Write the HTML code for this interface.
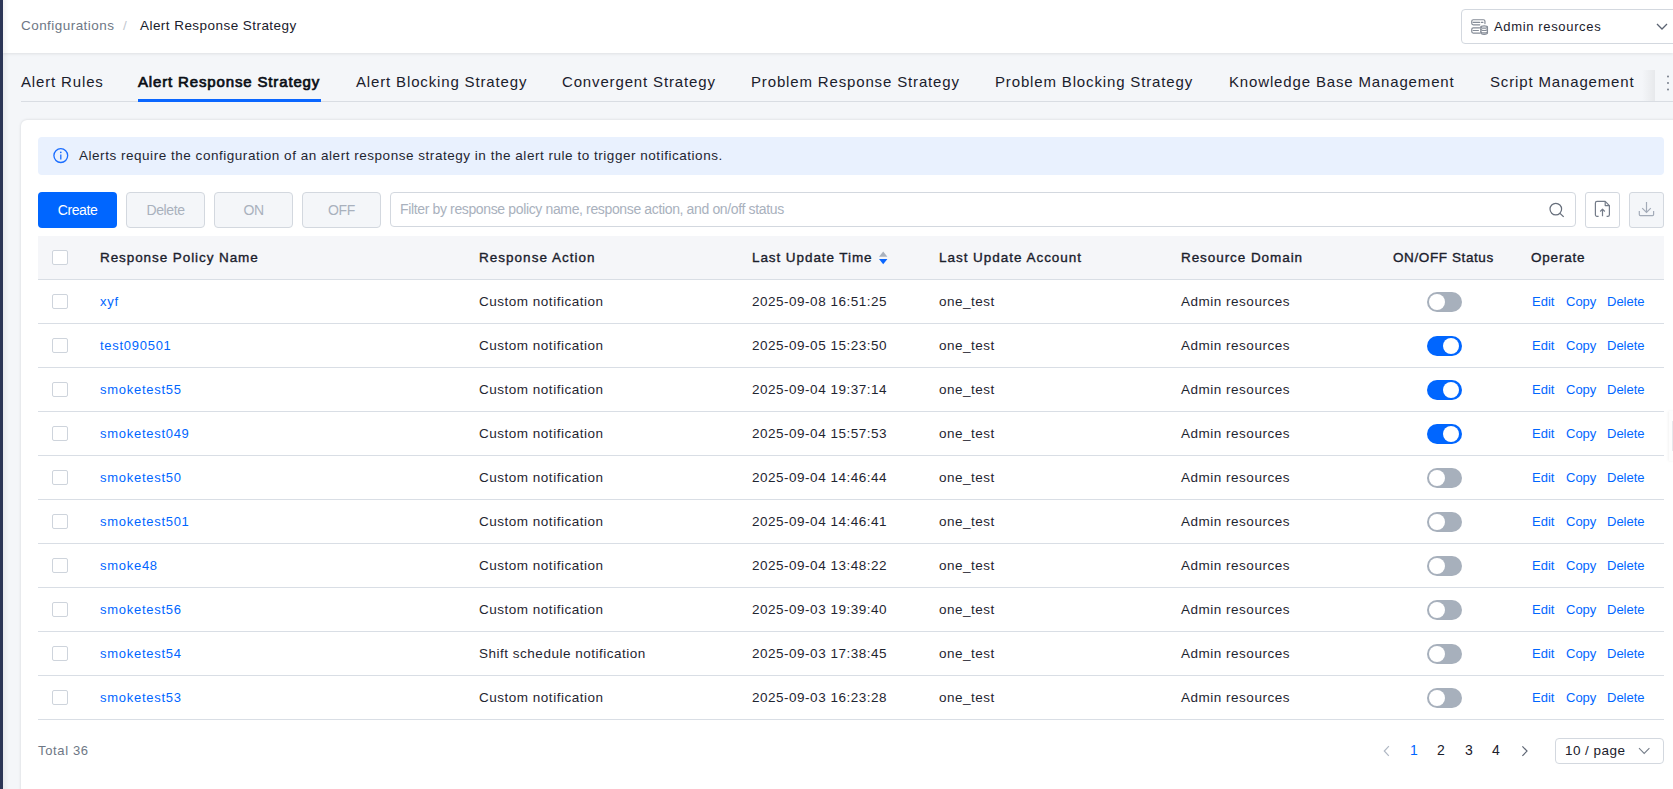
<!DOCTYPE html><html><head><meta charset="utf-8"><style>
*{box-sizing:border-box;margin:0;padding:0}
html,body{width:1673px;height:789px;overflow:hidden}
body{position:relative;background:#f4f6f9;font-family:"Liberation Sans",sans-serif;color:#1a202c}
.a{position:absolute;white-space:nowrap}
.strip{left:0;top:0;width:3px;height:789px;background:#2c3656;z-index:5}
.shadowL{left:3px;top:0;width:6px;height:789px;background:linear-gradient(to right,rgba(0,0,0,0.05),rgba(0,0,0,0));z-index:4}
.hdr{left:3px;top:0;width:1670px;height:53px;background:#fff;box-shadow:0 1px 3px rgba(0,0,0,0.09)}
.bc{font-size:13.5px;letter-spacing:0.45px;line-height:20px}
.sel{left:1461px;top:9px;width:230px;height:35px;border:1px solid #d3d8df;border-radius:4px;background:#fff}
.tabs{font-size:15px;letter-spacing:0.85px;line-height:20px;color:#1a202c}
.tabline{left:21px;top:101px;width:1652px;height:1px;background:#d9dde3}
.card{left:21px;top:120px;width:1700px;height:700px;background:#fff;border-radius:6px;box-shadow:0 0 3px rgba(0,0,0,0.14)}
.alert{left:38px;top:137px;width:1626px;height:38px;background:#e9f1fe;border-radius:4px}
.btn{top:192px;height:36px;border-radius:4px;font-size:14px;letter-spacing:-0.4px;line-height:20px;padding-top:8px;text-align:center}
.btnd{background:#f4f6f9;border:1px solid #d3d8df;color:#a9b1bd;padding-top:7px}
.search{left:390px;top:192px;width:1186px;height:35px;border:1px solid #d3d8df;border-radius:4px;background:#fff}
.th{left:38px;top:236px;width:1626px;height:43px;background:#f5f6f9}
.line{left:38px;height:1px;width:1626px;background:#d9dee5}
.hcell{font-size:13.5px;font-weight:400;letter-spacing:0.9px;line-height:20px;color:#1a202c;-webkit-text-stroke:0.35px #1a202c}
.cell{font-size:13.5px;letter-spacing:0.51px;line-height:20px;color:#1f2531}
.lnk{color:#0066ff}
.cb{width:16px;height:15px;border:1px solid #ced4dc;border-radius:2px;background:#fff}
.tg{width:35px;height:20px;border-radius:10px;background:#a7b0bc}
.tg i{position:absolute;top:2px;left:2px;width:16px;height:16px;border-radius:50%;background:#fff}
.tg.on{background:#0066ff}
.tg.on i{left:16px}
.op{font-size:13px;line-height:20px;color:#0066ff}
</style></head><body><div class="a strip"></div><div class="a shadowL"></div><div class="a hdr"></div><div class="a bc" style="left:21px;top:16px;color:#6e7785">Configurations</div><div class="a bc" style="left:123px;top:16px;color:#c2c8d0">/</div><div class="a bc" style="left:140px;top:16px;color:#1a202c">Alert Response Strategy</div><div class="a sel"></div><div class="a bc" style="left:1494px;top:17px;color:#1a202c;font-size:13px;letter-spacing:0.65px">Admin resources</div><div class="a tabline"></div><div class="a tabs" style="left:21px;top:72px">Alert Rules</div><div class="a tabs" style="left:138px;top:72px;-webkit-text-stroke:0.7px #0b0f16;color:#0b0f16">Alert Response Strategy</div><div class="a" style="left:138px;top:99px;width:183px;height:3px;background:#0a66ff"></div><div class="a tabs" style="left:356px;top:72px">Alert Blocking Strategy</div><div class="a tabs" style="left:562px;top:72px">Convergent Strategy</div><div class="a tabs" style="left:751px;top:72px">Problem Response Strategy</div><div class="a tabs" style="left:995px;top:72px">Problem Blocking Strategy</div><div class="a tabs" style="left:1229px;top:72px">Knowledge Base Management</div><div class="a tabs" style="left:1490px;top:72px">Script Management</div><div class="a" style="left:1642px;top:70px;width:13px;height:31px;background:linear-gradient(to right,rgba(0,0,0,0),rgba(0,0,0,0.055))"></div><div class="a card"></div><div class="a alert"></div><div class="a cell" style="left:79px;top:146px;letter-spacing:0.53px">Alerts require the configuration of an alert response strategy in the alert rule to trigger notifications.</div><div class="a btn" style="left:38px;width:79px;background:#0066ff;color:#fff">Create</div><div class="a btn btnd" style="left:126px;width:79px">Delete</div><div class="a btn btnd" style="left:214px;width:79px">ON</div><div class="a btn btnd" style="left:302px;width:79px">OFF</div><div class="a search"></div><div class="a" style="left:400px;top:199px;font-size:14px;letter-spacing:-0.36px;line-height:20px;color:#a9b1bd">Filter by response policy name, response action, and on/off status</div><div class="a" style="left:1585px;top:192px;width:35px;height:36px;border:1px solid #d3d8df;border-radius:3px;background:#fff"></div><div class="a" style="left:1629px;top:192px;width:35px;height:36px;border:1px solid #d3d8df;border-radius:3px;background:#f4f6f9"></div><div class="a th"></div><div class="a line" style="top:279px"></div><div class="a cb" style="left:52px;top:250px"></div><div class="a hcell" style="left:100px;top:248px;letter-spacing:0.92px">Response Policy Name</div><div class="a hcell" style="left:479px;top:248px;letter-spacing:1.02px">Response Action</div><div class="a hcell" style="left:752px;top:248px;letter-spacing:0.92px">Last Update Time</div><div class="a hcell" style="left:939px;top:248px;letter-spacing:0.97px">Last Update Account</div><div class="a hcell" style="left:1181px;top:248px;letter-spacing:0.93px">Resource Domain</div><div class="a hcell" style="left:1393px;top:248px;letter-spacing:0.6px">ON/OFF Status</div><div class="a hcell" style="left:1531px;top:248px;letter-spacing:0.8px">Operate</div><div class="a line" style="top:323px"></div><div class="a cb" style="left:52px;top:294px"></div><div class="a lnk" style="left:100px;top:292px;font-size:13px;letter-spacing:0.72px;line-height:20px">xyf</div><div class="a cell" style="left:479px;top:292px">Custom notification</div><div class="a cell" style="left:752px;top:292px">2025-09-08 16:51:25</div><div class="a cell" style="left:939px;top:292px">one_test</div><div class="a cell" style="left:1181px;top:292px">Admin resources</div><div class="a tg" style="left:1427px;top:292px"><i></i></div><div class="a op" style="left:1532px;top:292px">Edit</div><div class="a op" style="left:1566px;top:292px">Copy</div><div class="a op" style="left:1607px;top:292px">Delete</div><div class="a line" style="top:367px"></div><div class="a cb" style="left:52px;top:338px"></div><div class="a lnk" style="left:100px;top:336px;font-size:13px;letter-spacing:0.72px;line-height:20px">test090501</div><div class="a cell" style="left:479px;top:336px">Custom notification</div><div class="a cell" style="left:752px;top:336px">2025-09-05 15:23:50</div><div class="a cell" style="left:939px;top:336px">one_test</div><div class="a cell" style="left:1181px;top:336px">Admin resources</div><div class="a tg on" style="left:1427px;top:336px"><i></i></div><div class="a op" style="left:1532px;top:336px">Edit</div><div class="a op" style="left:1566px;top:336px">Copy</div><div class="a op" style="left:1607px;top:336px">Delete</div><div class="a line" style="top:411px"></div><div class="a cb" style="left:52px;top:382px"></div><div class="a lnk" style="left:100px;top:380px;font-size:13px;letter-spacing:0.72px;line-height:20px">smoketest55</div><div class="a cell" style="left:479px;top:380px">Custom notification</div><div class="a cell" style="left:752px;top:380px">2025-09-04 19:37:14</div><div class="a cell" style="left:939px;top:380px">one_test</div><div class="a cell" style="left:1181px;top:380px">Admin resources</div><div class="a tg on" style="left:1427px;top:380px"><i></i></div><div class="a op" style="left:1532px;top:380px">Edit</div><div class="a op" style="left:1566px;top:380px">Copy</div><div class="a op" style="left:1607px;top:380px">Delete</div><div class="a line" style="top:455px"></div><div class="a cb" style="left:52px;top:426px"></div><div class="a lnk" style="left:100px;top:424px;font-size:13px;letter-spacing:0.72px;line-height:20px">smoketest049</div><div class="a cell" style="left:479px;top:424px">Custom notification</div><div class="a cell" style="left:752px;top:424px">2025-09-04 15:57:53</div><div class="a cell" style="left:939px;top:424px">one_test</div><div class="a cell" style="left:1181px;top:424px">Admin resources</div><div class="a tg on" style="left:1427px;top:424px"><i></i></div><div class="a op" style="left:1532px;top:424px">Edit</div><div class="a op" style="left:1566px;top:424px">Copy</div><div class="a op" style="left:1607px;top:424px">Delete</div><div class="a line" style="top:499px"></div><div class="a cb" style="left:52px;top:470px"></div><div class="a lnk" style="left:100px;top:468px;font-size:13px;letter-spacing:0.72px;line-height:20px">smoketest50</div><div class="a cell" style="left:479px;top:468px">Custom notification</div><div class="a cell" style="left:752px;top:468px">2025-09-04 14:46:44</div><div class="a cell" style="left:939px;top:468px">one_test</div><div class="a cell" style="left:1181px;top:468px">Admin resources</div><div class="a tg" style="left:1427px;top:468px"><i></i></div><div class="a op" style="left:1532px;top:468px">Edit</div><div class="a op" style="left:1566px;top:468px">Copy</div><div class="a op" style="left:1607px;top:468px">Delete</div><div class="a line" style="top:543px"></div><div class="a cb" style="left:52px;top:514px"></div><div class="a lnk" style="left:100px;top:512px;font-size:13px;letter-spacing:0.72px;line-height:20px">smoketest501</div><div class="a cell" style="left:479px;top:512px">Custom notification</div><div class="a cell" style="left:752px;top:512px">2025-09-04 14:46:41</div><div class="a cell" style="left:939px;top:512px">one_test</div><div class="a cell" style="left:1181px;top:512px">Admin resources</div><div class="a tg" style="left:1427px;top:512px"><i></i></div><div class="a op" style="left:1532px;top:512px">Edit</div><div class="a op" style="left:1566px;top:512px">Copy</div><div class="a op" style="left:1607px;top:512px">Delete</div><div class="a line" style="top:587px"></div><div class="a cb" style="left:52px;top:558px"></div><div class="a lnk" style="left:100px;top:556px;font-size:13px;letter-spacing:0.72px;line-height:20px">smoke48</div><div class="a cell" style="left:479px;top:556px">Custom notification</div><div class="a cell" style="left:752px;top:556px">2025-09-04 13:48:22</div><div class="a cell" style="left:939px;top:556px">one_test</div><div class="a cell" style="left:1181px;top:556px">Admin resources</div><div class="a tg" style="left:1427px;top:556px"><i></i></div><div class="a op" style="left:1532px;top:556px">Edit</div><div class="a op" style="left:1566px;top:556px">Copy</div><div class="a op" style="left:1607px;top:556px">Delete</div><div class="a line" style="top:631px"></div><div class="a cb" style="left:52px;top:602px"></div><div class="a lnk" style="left:100px;top:600px;font-size:13px;letter-spacing:0.72px;line-height:20px">smoketest56</div><div class="a cell" style="left:479px;top:600px">Custom notification</div><div class="a cell" style="left:752px;top:600px">2025-09-03 19:39:40</div><div class="a cell" style="left:939px;top:600px">one_test</div><div class="a cell" style="left:1181px;top:600px">Admin resources</div><div class="a tg" style="left:1427px;top:600px"><i></i></div><div class="a op" style="left:1532px;top:600px">Edit</div><div class="a op" style="left:1566px;top:600px">Copy</div><div class="a op" style="left:1607px;top:600px">Delete</div><div class="a line" style="top:675px"></div><div class="a cb" style="left:52px;top:646px"></div><div class="a lnk" style="left:100px;top:644px;font-size:13px;letter-spacing:0.72px;line-height:20px">smoketest54</div><div class="a cell" style="left:479px;top:644px">Shift schedule notification</div><div class="a cell" style="left:752px;top:644px">2025-09-03 17:38:45</div><div class="a cell" style="left:939px;top:644px">one_test</div><div class="a cell" style="left:1181px;top:644px">Admin resources</div><div class="a tg" style="left:1427px;top:644px"><i></i></div><div class="a op" style="left:1532px;top:644px">Edit</div><div class="a op" style="left:1566px;top:644px">Copy</div><div class="a op" style="left:1607px;top:644px">Delete</div><div class="a line" style="top:719px"></div><div class="a cb" style="left:52px;top:690px"></div><div class="a lnk" style="left:100px;top:688px;font-size:13px;letter-spacing:0.72px;line-height:20px">smoketest53</div><div class="a cell" style="left:479px;top:688px">Custom notification</div><div class="a cell" style="left:752px;top:688px">2025-09-03 16:23:28</div><div class="a cell" style="left:939px;top:688px">one_test</div><div class="a cell" style="left:1181px;top:688px">Admin resources</div><div class="a tg" style="left:1427px;top:688px"><i></i></div><div class="a op" style="left:1532px;top:688px">Edit</div><div class="a op" style="left:1566px;top:688px">Copy</div><div class="a op" style="left:1607px;top:688px">Delete</div><div class="a" style="left:38px;top:741px;font-size:13px;letter-spacing:0.65px;line-height:20px;color:#6e7785">Total 36</div><div class="a" style="left:1410px;top:740px;font-size:14px;line-height:20px;color:#0066ff">1</div><div class="a" style="left:1437px;top:740px;font-size:14px;line-height:20px;color:#1a202c">2</div><div class="a" style="left:1465px;top:740px;font-size:14px;line-height:20px;color:#1a202c">3</div><div class="a" style="left:1492px;top:740px;font-size:14px;line-height:20px;color:#1a202c">4</div><div class="a" style="left:1669px;top:411px;width:10px;height:50px;background:#fdfdfd;box-shadow:-1px 0 3px rgba(0,0,0,0.05)"></div><div class="a" style="left:1672px;top:421px;width:2px;height:30px;background:#e6e8ec"></div><div class="a" style="left:1555px;top:738px;width:109px;height:26px;border:1px solid #d3d8df;border-radius:4px;background:#fff"></div><div class="a" style="left:1565px;top:741px;font-size:13.5px;letter-spacing:0.45px;line-height:20px;color:#1a202c">10 / page</div><svg class="a" style="left:0;top:0;z-index:10" width="1673" height="789" viewBox="0 0 1673 789"><g transform="translate(1465,14)" fill="none" stroke="#858c97" stroke-width="1.2" stroke-linecap="round"><path d="M14.8 10.85H8.3a1.55 1.55 0 0 1-1.55-1.55V7.3a1.55 1.55 0 0 1 1.55-1.55H18.4a1.55 1.55 0 0 1 1.55 1.55V9.6"/><path d="M8.2 8.4H14.6M16.4 8.4H17.9"/><path d="M14.6 19.15H8.3a1.55 1.55 0 0 1-1.55-1.55V15.4a1.55 1.55 0 0 1 1.55-1.55H14.6"/><path d="M8.2 16.5H13.4"/><ellipse cx="19.15" cy="13" rx="3.3" ry="1.15"/><path d="M15.85 13V19.1c0 .7 1.5 1.2 3.3 1.2s3.3-.5 3.3-1.2V13"/><path d="M15.85 15.3c0 .7 1.5 1.2 3.3 1.2s3.3-.5 3.3-1.2M15.85 17.7c0 .7 1.5 1.2 3.3 1.2s3.3-.5 3.3-1.2"/></g><path d="M1657 24L1662 29L1667 24" fill="none" stroke="#5b6372" stroke-width="1.3"/><circle cx="1668" cy="76.5" r="0.9" fill="#6b7380"/><circle cx="1668" cy="83" r="0.9" fill="#6b7380"/><circle cx="1668" cy="89.5" r="0.9" fill="#6b7380"/><circle cx="60.8" cy="155.6" r="6.9" fill="none" stroke="#1a6dff" stroke-width="1.3"/><circle cx="60.8" cy="152.3" r="0.85" fill="#1a6dff"/><path d="M60.8 154.4V159.6" stroke="#1a6dff" stroke-width="1.3"/><circle cx="1555.8" cy="209.1" r="5.8" fill="none" stroke="#666e7b" stroke-width="1.2"/><path d="M1560 213.4L1563.7 216.9" stroke="#666e7b" stroke-width="1.3"/><g fill="none" stroke="#747c89" stroke-width="1.2" stroke-linejoin="round"><path d="M1598.6 216.4H1597a1.6 1.6 0 0 1-1.6-1.6V203a1.6 1.6 0 0 1 1.6-1.6H1605.2L1609.4 205.6V214.8a1.6 1.6 0 0 1-1.6 1.6H1606.6"/><path d="M1605.2 201.4V205.6H1609.4"/><path d="M1602.5 216.2V209.2M1600.2 211.5L1602.5 209.2L1604.8 211.5"/></g><g fill="none" stroke="#a3abb8" stroke-width="1.2"><path d="M1639.3 211V214.6a1 1 0 0 0 1 1H1652.6a1 1 0 0 0 1-1V211"/><path d="M1646.5 202V212.4M1642.2 208.1L1646.5 212.4L1650.8 208.1"/></g><path d="M879 256.7L883.2 251.6L887.4 256.7Z" fill="#a9b1bd"/><path d="M879 258.9L887.4 258.9L883.2 264.2Z" fill="#0a66ff"/><path d="M1388.9 746.1L1384.3 751L1388.8 755.8" fill="none" stroke="#b0b8c4" stroke-width="1.2"/><path d="M1522.4 746.3L1527 751.1L1522.4 755.9" fill="none" stroke="#5f6775" stroke-width="1.2"/><path d="M1639 748.2L1644.2 753.4L1649.4 748.2" fill="none" stroke="#757d89" stroke-width="1.1"/></svg></body></html>
